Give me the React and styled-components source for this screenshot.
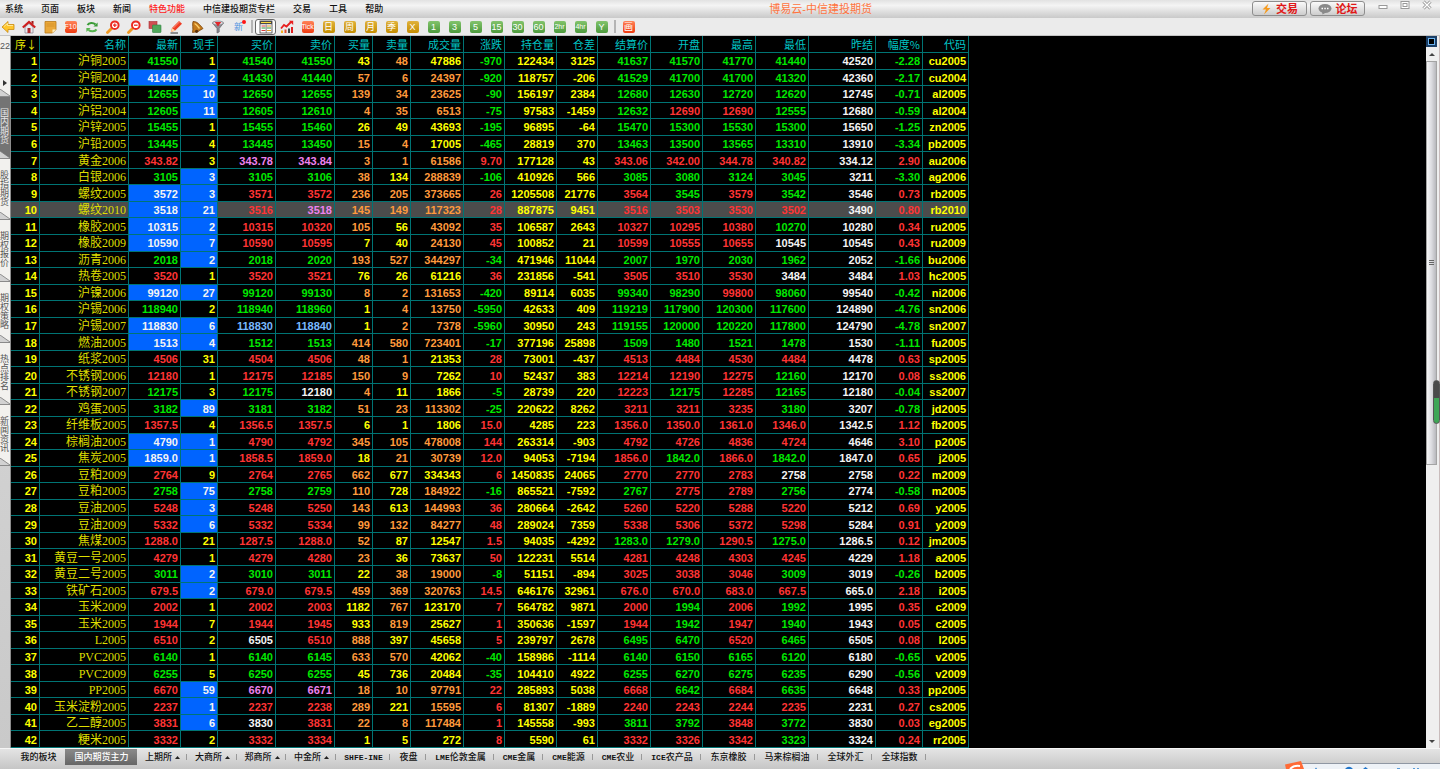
import React from 'react';
import styled, { createGlobalStyle } from 'styled-components';

const GlobalStyle = createGlobalStyle`
  * {
    box-sizing: border-box;
  }
  body {
    margin: 0;
    background: #d6d6d6;
    font-family: "Liberation Sans", "Noto Sans CJK SC", sans-serif;
    font-size: 9px;
  }
  button {
    margin: 0;
    padding: 0;
    border: 0;
    background: none;
    font: inherit;
    color: inherit;
    cursor: pointer;
  }
`;

const RED = '#ff3434';
const GREEN = '#00e800';
const YELLOW = '#ffff00';
const ORANGE = '#ff9a3c';
const WHITE = '#f4f4f4';
const VIOLET = '#ee82ee';
const SKY = '#78b8ff';

const menus = ['系统', '页面', '板块', '新闻', '特色功能', '中信建投期货专栏', '交易', '工具', '帮助'];

const columns = [
  { name: '序↓', width: 29 },
  { name: '名称', width: 89 },
  { name: '最新', width: 52 },
  { name: '现手', width: 37 },
  { name: '买价', width: 58 },
  { name: '卖价', width: 59 },
  { name: '买量', width: 38 },
  { name: '卖量', width: 38 },
  { name: '成交量', width: 53 },
  { name: '涨跌', width: 41 },
  { name: '持仓量', width: 52 },
  { name: '仓差', width: 41 },
  { name: '结算价', width: 53 },
  { name: '开盘', width: 52 },
  { name: '最高', width: 53 },
  { name: '最低', width: 53 },
  { name: '昨结', width: 67 },
  { name: '幅度%', width: 47 },
  { name: '代码', width: 46 },
];

// * = just traded, ! = active volume, v / b = special quote colour
const quotes = `
沪铜2005 41550 1 41540 41550 !43 48 !47886 -970 122434 3125 41637 41570 41770 41440 42520 -2.28 cu2005
沪铜2004 *41440 *2 41430 41440 57 6 24397 -920 118757 -206 41529 41700 41700 41320 42360 -2.17 cu2004
沪铝2005 12655 *10 12650 12655 139 34 23625 -90 156197 2384 12680 12630 12720 12620 12745 -0.71 al2005
沪铝2004 12605 *11 12605 12610 4 35 6513 -75 97583 -1459 12632 12690 12690 12555 12680 -0.59 al2004
沪锌2005 15455 1 15455 15460 !26 !49 !43693 -195 96895 -64 15470 15300 15530 15300 15650 -1.25 zn2005
沪铅2005 13445 4 13445 13450 15 4 !17005 -465 28819 370 13463 13500 13565 13310 13910 -3.34 pb2005
黄金2006 343.82 3 v343.78 v343.84 3 1 61586 9.70 177128 43 343.06 342.00 344.78 340.82 334.12 2.90 au2006
白银2006 3105 *3 3105 3106 38 !134 288839 -106 410926 566 3085 3080 3124 3045 3211 -3.30 ag2006
螺纹2005 *3572 *3 3571 3572 236 205 373665 26 1205508 21776 3564 3545 3579 3542 3546 0.73 rb2005
螺纹2010 *3518 *21 3516 v3518 145 149 117323 28 887875 9451 3516 3503 3530 3502 3490 0.80 rb2010
橡胶2005 *10315 *2 10315 10320 105 !56 43092 35 106587 2643 10327 10295 10380 10270 10280 0.34 ru2005
橡胶2009 *10590 *7 10590 10595 !7 !40 24130 45 100852 21 10599 10555 10655 10545 10545 0.43 ru2009
沥青2006 2018 *2 2018 2020 193 527 344297 -34 471946 11044 2007 1970 2030 1962 2052 -1.66 bu2006
热卷2005 3520 1 3520 3521 !76 !26 !61216 36 231856 -541 3505 3510 3530 3484 3484 1.03 hc2005
沪镍2006 *99120 *27 99120 99130 8 2 131653 -420 89114 6035 99340 98290 99800 98060 99540 -0.42 ni2006
沪锡2006 118940 2 118940 118960 !1 4 13750 -5950 42633 409 119219 117900 120300 117600 124890 -4.76 sn2006
沪锡2007 *118830 *6 b118830 b118840 !1 2 7378 -5960 30950 243 119155 120000 120220 117800 124790 -4.78 sn2007
燃油2005 *1513 *4 1512 1513 414 580 723401 -17 377196 25898 1509 1480 1521 1478 1530 -1.11 fu2005
纸浆2005 4506 31 4504 4506 48 1 !21353 28 73001 -437 4513 4484 4530 4484 4478 0.63 sp2005
不锈钢2006 12180 1 12175 12185 150 9 !7262 10 52437 383 12214 12190 12275 12160 12170 0.08 ss2006
不锈钢2007 12175 3 12175 12180 4 !11 !1866 -5 28739 220 12223 12175 12285 12165 12180 -0.04 ss2007
鸡蛋2005 3182 *89 3181 3182 51 23 113302 -25 220622 8262 3211 3211 3235 3180 3207 -0.78 jd2005
纤维板2005 1357.5 4 1356.5 1357.5 !6 !1 !1806 15.0 4285 223 1356.0 1350.0 1361.0 1346.0 1342.5 1.12 fb2005
棕榈油2005 *4790 *1 4790 4792 345 105 478008 144 263314 -903 4792 4726 4836 4724 4646 3.10 p2005
焦炭2005 *1859.0 *1 1858.5 1859.0 !18 21 30739 12.0 94053 -7194 1856.0 1842.0 1866.0 1842.0 1847.0 0.65 j2005
豆粕2009 2764 9 2764 2765 662 !677 !334343 6 1450835 24065 2770 2770 2783 2758 2758 0.22 m2009
豆粕2005 2758 *75 2758 2759 110 !728 184922 -16 865521 -7592 2767 2775 2789 2756 2774 -0.58 m2005
豆油2005 5248 *3 5248 5250 143 !613 144993 36 280664 -2642 5260 5220 5288 5220 5212 0.69 y2005
豆油2009 5332 *6 5332 5334 99 132 84277 48 289024 7359 5338 5306 5372 5298 5284 0.91 y2009
焦煤2005 1288.0 21 1287.5 1288.0 52 !87 !12547 1.5 94035 -4292 1283.0 1279.0 1290.5 1275.0 1286.5 0.12 jm2005
黄豆一号2005 4279 1 4279 4280 23 !36 !73637 50 122231 5514 4281 4248 4303 4245 4229 1.18 a2005
黄豆二号2005 3011 *2 3010 3011 !22 38 19000 -8 51151 -894 3025 3038 3046 3009 3019 -0.26 b2005
铁矿石2005 679.5 *2 679.0 679.5 459 369 320763 14.5 646176 32961 676.0 670.0 683.0 667.5 665.0 2.18 i2005
玉米2009 2002 1 2002 2003 !1182 767 !123170 7 564782 9871 2000 1994 2006 1992 1995 0.35 c2009
玉米2005 1944 7 1944 1945 !933 819 !25627 1 350636 -1597 1944 1942 1947 1940 1943 0.05 c2005
L2005 6510 2 6505 6510 888 !397 !45658 5 239797 2678 6495 6470 6520 6465 6505 0.08 l2005
PVC2005 6140 1 6140 6145 633 570 !42062 -40 158986 -1114 6140 6150 6165 6120 6180 -0.65 v2005
PVC2009 6255 5 6250 6255 !45 !736 !20484 -35 104410 4922 6255 6270 6275 6235 6290 -0.56 v2009
PP2005 6670 *59 v6670 v6671 18 10 97791 22 285893 5038 6668 6642 6684 6635 6648 0.33 pp2005
玉米淀粉2005 2237 *1 2237 2238 289 !221 15595 6 81307 -1889 2240 2243 2244 2235 2231 0.27 cs2005
乙二醇2005 3831 *6 3830 3831 22 8 117484 1 145558 -993 3811 3792 3848 3772 3830 0.03 eg2005
粳米2005 3332 2 3332 3334 !1 !5 !272 8 5590 61 3332 3326 3342 3323 3324 0.24 rr2005
`.trim().split('\n').map((line) => line.split(' '));

const boards = [
  { name: '我的板块', width: 54, plain: true },
  { name: '国内期货主力', width: 72, active: true },
  { name: '上期所', width: 50, more: true },
  { name: '大商所', width: 50, more: true },
  { name: '郑商所', width: 49, more: true },
  { name: '中金所', width: 50, more: true },
  { latin: 'SHFE-INE', name: '', width: 54 },
  { name: '夜盘', width: 36 },
  { latin: 'LME', name: '伦敦金属', width: 68 },
  { latin: 'CME', name: '金属', width: 49 },
  { latin: 'CME', name: '能源', width: 50 },
  { latin: 'CME', name: '农业', width: 49 },
  { latin: 'ICE', name: '农产品', width: 59 },
  { name: '东京橡胶', width: 54 },
  { name: '马来棕榈油', width: 63 },
  { name: '全球外汇', width: 54 },
  { name: '全球指数', width: 54 },
];

const periods = [
  ['Tick', 'red'], ['日', 'gold'], ['周', 'gold'], ['月', 'gold'], ['季', 'gold'], ['X', 'gold'],
  ['1', 'green'], ['3', 'green'], ['5', 'green'], ['15', 'green'], ['30', 'green'], ['60', 'green'],
  ['2hr', 'green'], ['4hr', 'green'], ['Y', 'green'],
];

const sideTabs = ['国内期货', '股指期货', '期权报价', '期权策略', '热点排名', '新闻资讯'];

const badgeColors = {
  red: 'linear-gradient(#ff8358, #ee3a10)',
  gold: 'linear-gradient(#e0b23c, #c48c00)',
  green: 'linear-gradient(#82c46c, #4c9a3c)',
};

function toneOf(index, text, prev) {
  if (text[0] === '*') return WHITE;
  if (text[0] === 'v') return VIOLET;
  if (text[0] === 'b' && index < 5) return SKY;
  if ([1, 3, 4, 11, 12, 13, 14].includes(index)) {
    const diff = Number(text) - prev;
    if (diff === 0) return WHITE;
    return diff > 0 ? RED : GREEN;
  }
  if ([5, 6, 7].includes(index)) return text[0] === '!' ? YELLOW : ORANGE;
  if (index === 8 || index === 16) return Number(text) > 0 ? RED : GREEN;
  if (index === 15) return WHITE;
  return YELLOW;
}

const icons = {
  back: (
    <>
      <path d="M1 7 L7 1.5 V4.5 H13 V9.5 H7 V12.5 Z" fill="#ffc62b" stroke="#c98a10" strokeWidth="0.8" />
      <path d="M3 6.5 L6.5 3.5 V5.5 H12" fill="none" stroke="#ffe896" />
    </>
  ),
  home: (
    <>
      <path d="M3 7 V13 H11 V7 L7 3.5 Z" fill="#e9e9ee" stroke="#8a8a98" strokeWidth="0.8" />
      <path d="M0.8 7.5 L7 2 L13.2 7.5" fill="none" stroke="#cf1f1f" strokeWidth="2.2" />
      <path d="M9.5 1 H11.5 V4.5 L9.5 3 Z" fill="#a51a1a" />
      <rect x="5.5" y="8" width="3" height="5" fill="#b02a2a" />
    </>
  ),
  note: (
    <>
      <path d="M2 1.5 H13 V9.5 L9.5 13 H2 Z" fill="#eaa83a" stroke="#b97a1a" strokeWidth="0.8" />
      <path d="M13 9.5 H9.5 V13 Z" fill="#fff0bd" />
      <path d="M3.5 4 H11.5 M3.5 6 H11.5" stroke="#c98520" strokeWidth="0.6" />
    </>
  ),
  refresh: (
    <>
      <path d="M2.5 5 C4 2.6 8 2.4 10.5 4.4" fill="none" stroke="#3b9b38" strokeWidth="2" />
      <path d="M12.6 2.4 V6.4 H8.4 Z" fill="#3b9b38" />
      <path d="M11.5 9.4 C10 11.8 6 12 3.5 10" fill="none" stroke="#57b550" strokeWidth="2" />
      <path d="M1.4 12 V8 H5.6 Z" fill="#57b550" />
    </>
  ),
  zoomIn: (
    <>
      <path d="M1.5 12.5 L5.5 8.5" stroke="#f09a22" strokeWidth="2.8" strokeLinecap="round" />
      <circle cx="8.8" cy="5.2" r="3.8" fill="#fff" stroke="#ec2a20" strokeWidth="2" />
      <path d="M7 5.2 H10.6 M8.8 3.4 V7" stroke="#ec2a20" strokeWidth="1.3" />
    </>
  ),
  zoomOut: (
    <>
      <path d="M1.5 12.5 L5.5 8.5" stroke="#f09a22" strokeWidth="2.8" strokeLinecap="round" />
      <circle cx="8.8" cy="5.2" r="3.8" fill="#fff" stroke="#ec2a20" strokeWidth="2" />
      <path d="M7 5.2 H10.6" stroke="#ec2a20" strokeWidth="1.3" />
    </>
  ),
  overlay: (
    <>
      <rect x="1" y="1.5" width="8" height="7" fill="#cf4f52" stroke="#a83034" strokeWidth="0.6" />
      <rect x="4.5" y="5" width="8.5" height="7.5" rx="0.6" fill="#4fa85b" stroke="#2f8240" strokeWidth="0.6" />
    </>
  ),
  pencil: (
    <>
      <path d="M3 8 L10 1 L13 3.8 L6.2 10.6 L2 12 Z" fill="#ee3c24" />
      <path d="M3 8 L6.2 10.6 L2 12 Z" fill="#ffd9a0" />
      <path d="M4.4 8 L10.6 1.8" stroke="#ff9a80" strokeWidth="1" />
      <path d="M1.5 13 H9" stroke="#333" strokeWidth="1" />
    </>
  ),
  bell: (
    <>
      <path d="M3 1.5 C7 1 10 5 13 8.5 L8 11.5 L2.5 12.5 C3.5 8 2 5 3 1.5 Z" fill="#c47a1c" stroke="#7a4308" strokeWidth="0.8" />
      <path d="M4.6 3.5 C6.5 4.5 8 6.5 9.5 8.5" fill="none" stroke="#ffcf6b" strokeWidth="1.4" />
      <circle cx="6.6" cy="11.3" r="1.6" fill="#5a2f0a" />
    </>
  ),
  funnel: (
    <>
      <path d="M1.5 3 L6 8.5 V13 L8.2 12 V8.5 L12.5 3 Z" fill="#8d8d93" stroke="#55555c" strokeWidth="0.6" />
      <ellipse cx="7" cy="3" rx="5.5" ry="2" fill="#d8d8dc" stroke="#77777c" strokeWidth="0.7" />
      <path d="M3.8 2 H10.2 L7 6.4 Z" fill="#e2262a" />
    </>
  ),
  quote: (
    <>
      <rect x="1" y="1" width="12" height="12" fill="#fff" stroke="#404040" strokeWidth="0.8" />
      <rect x="1" y="1" width="12" height="3.2" fill="#4a4a4a" />
      <rect x="2" y="2" width="10" height="1" fill="#ffd93b" />
      <path d="M2.5 6 H6.5 M2.5 10.5 H6.5" stroke="#d93a3a" />
      <path d="M2.5 8 H6.5 M8 8 H12" stroke="#2c9b3e" />
      <path d="M8 6 H12 M8 10.5 H12" stroke="#e0931c" />
      <path d="M7.2 4.5 V13" stroke="#606060" strokeWidth="0.8" />
    </>
  ),
  trend: (
    <>
      <path d="M1 8.5 L4 5 L6.5 6.5 L11.5 1.5" fill="none" stroke="#e81f1f" strokeWidth="1.8" />
      <path d="M9 0.8 H13.2 V5 Z" fill="#e81f1f" />
      <path d="M2 10.5 V13" stroke="#f5b020" strokeWidth="2" />
      <path d="M5.5 9.5 V13" stroke="#e05030" strokeWidth="2" />
      <path d="M9 8.5 V13" stroke="#444" strokeWidth="2" />
      <path d="M12 7 V13" stroke="#e02020" strokeWidth="2" />
    </>
  ),
};

const tools = [
  ['返回', 'back'], ['首页', 'home'], ['便签', 'note'], ['F10', null], ['刷新', 'refresh'],
  ['放大', 'zoomIn'], ['缩小', 'zoomOut'], ['叠加', 'overlay'], ['画线', 'pencil'],
  ['预警', 'bell'], ['筛选', 'funnel'],
];

const Icon = ({ name }) => (
  <svg width="14" height="14" viewBox="0 0 14 14" aria-hidden="true">{icons[name]}</svg>
);

const QuoteRow = ({ row, number }) => {
  const prev = Number(row[15]);
  return (
    <Row $selected={number === 10}>
      <Cell $color={YELLOW}>{number}</Cell>
      {row.map((text, i) => {
        if (i === 0) return <NameCell key={i}>{text}</NameCell>;
        const label = i === 17 ? text : text.replace(/^[*!vb]/, '');
        return (
          <Cell key={i} $color={i === 17 ? YELLOW : toneOf(i, text, prev)} $flash={text[0] === '*'}>
            {label}
          </Cell>
        );
      })}
    </Row>
  );
};

export default function App() {
  return (
    <Shell>
      <GlobalStyle />
      <TitleBar>
        <Menu>
          {menus.map((m) => <MenuItem key={m} $hot={m === '特色功能'}>{m}</MenuItem>)}
        </Menu>
        <Title>博易云-中信建投期货</Title>
        <Actions>
          <ActionButton>
            <svg width="11" height="12" viewBox="0 0 11 12" aria-hidden="true">
              <path d="M7.5 0.5 L1.5 6.5 H5 L3 11.5 L9.5 5 H6 Z" fill="#f59a1e" />
            </svg>
            交易
          </ActionButton>
          <ActionButton>
            <svg width="14" height="12" viewBox="0 0 14 12" aria-hidden="true">
              <ellipse cx="7" cy="5.5" rx="6.5" ry="4.5" fill="#8a8a8a" />
              <path d="M4 8.5 L4.5 11.5 L8 9.5 Z" fill="#8a8a8a" />
              <path d="M3.5 5.5 H5 M6.3 5.5 H7.8 M9 5.5 H10.5" stroke="#fff" strokeWidth="1.4" />
            </svg>
            论坛
          </ActionButton>
        </Actions>
        <WindowButtons>
          <button aria-label="最小化">
            <svg width="10" height="12"><rect x="1" y="5.5" width="8" height="3" fill="#fff" stroke="#9a9a9a" /></svg>
          </button>
          <button aria-label="还原">
            <svg width="10" height="12">
              <rect x="1" y="1.5" width="8" height="7" fill="#fff" stroke="#9a9a9a" />
              <rect x="3" y="3.5" width="4" height="3" fill="#fff" stroke="#9a9a9a" />
            </svg>
          </button>
          <button aria-label="关闭">
            <svg width="10" height="12">
              <path d="M1.5 1.5 L8.5 8.5 M8.5 1.5 L1.5 8.5" stroke="#8f8f8f" strokeWidth="3" />
              <path d="M1.5 1.5 L8.5 8.5 M8.5 1.5 L1.5 8.5" stroke="#fff" strokeWidth="1.4" />
            </svg>
          </button>
        </WindowButtons>
      </TitleBar>

      <ToolBar>
        {tools.map(([label, icon]) => (
          <Tool key={label} aria-label={label}>
            {icon ? <Icon name={icon} /> : <Badge $kind="red" $small>{label}</Badge>}
          </Tool>
        ))}
        <Tool>
          <NewMark>新<RedDot /></NewMark>
        </Tool>
        <Divider />
        <Tool aria-label="报价" $pressed><Icon name="quote" /></Tool>
        <Tool aria-label="走势"><Icon name="trend" /></Tool>
        {periods.map(([label, kind]) => (
          <Tool key={label}><Badge $kind={kind} $small={label.length > 2}>{label}</Badge></Tool>
        ))}
        <Divider />
        <Tool><Badge $kind="red">画</Badge></Tool>
      </ToolBar>

      <Body>
        <Side>
          <SideTabs>
            <SideTop>
              <span>22</span>
              <svg width="4" height="6" aria-hidden="true"><path d="M0 0 L4 3 L0 6 Z" fill="#333" /></svg>
              <Slant />
            </SideTop>
            {sideTabs.map((t, i) => (
              <SideTab key={t} $active={i === 0}>
                {t}
                <Slant />
              </SideTab>
            ))}
          </SideTabs>
        </Side>

        <Board>
          <Quotes>
            <colgroup>
              {columns.map((c) => <Col key={c.name} $width={c.width} />)}
            </colgroup>
            <thead>
              <tr>
                {columns.map((c, i) => <Head key={c.name} $first={i === 0}>{c.name}</Head>)}
              </tr>
            </thead>
            <tbody>
              {quotes.map((row, i) => <QuoteRow key={row[17]} row={row} number={i + 1} />)}
            </tbody>
          </Quotes>
        </Board>

        <ScrollBar>
          <SplitButton aria-label="窗口" />
          <ScrollArrow aria-label="上"><svg width="6" height="3"><path d="M0 3 L3 0 L6 3 Z" fill="#444" /></svg></ScrollArrow>
          <Track>
            <Thumb><i /><i /><i /></Thumb>
          </Track>
          <ScrollArrow aria-label="下"><svg width="6" height="3"><path d="M0 0 L3 3 L6 0 Z" fill="#444" /></svg></ScrollArrow>
          <Gauge />
        </ScrollBar>
      </Body>

      <BoardTabs>
        {boards.map((b) => (
          <BoardTab key={(b.latin || '') + b.name} $width={b.width} $active={b.active} $plain={b.plain}>
            {b.latin && <Latin>{b.latin}</Latin>}
            {b.name}
            {b.more && <svg width="8" height="3" aria-hidden="true"><path d="M3 3 L5.500 0 L8 3 Z" fill="#222" /></svg>}
          </BoardTab>
        ))}
      </BoardTabs>

      <InputBar aria-hidden="true">
        <svg width="155" height="8" viewBox="0 0 155 8">
          <path d="M10 2.500 H155" stroke="#8f97a3" />
          <rect x="10" y="3" width="145" height="5" fill="#eef2f7" />
          <path d="M0 3.500 L16 0 L19 8 H1 Z" fill="#ff6a35" />
          <path d="M5 8 Q9 4 15 5" fill="none" stroke="#fff" strokeWidth="2" />
          <path d="M30 8 L31 6.500 L32 8 Z M60 8 Q64 3.500 68 8 Z M78 8 L80.500 6 L83 8 Z" fill="#1f74c9" />
          <path d="M112 7.500 H115 M128 7.500 H130 M132 7.500 H134" stroke="#5a9bd8" />
        </svg>
      </InputBar>
    </Shell>
  );
}

const Shell = styled.div`
  position: relative;
  display: flex;
  flex-direction: column;
  height: 100vh;
  overflow: hidden;
`;

const TitleBar = styled.header`
  display: flex;
  align-items: center;
  flex: none;
  height: 18px;
  background: linear-gradient(#e2e2e2, #f4f4f4 30%, #c9c9c9);
`;

const Menu = styled.nav`
  display: flex;
  gap: 18px;
  padding-left: 5px;
`;

const MenuItem = styled.button`
  line-height: 16px;
  font-weight: 500;
  color: ${(p) => (p.$hot ? '#ff1c1c' : '#111')};
`;

const Title = styled.div`
  flex: 1;
  padding-left: 6px;
  text-align: center;
  font-size: 11px;
  line-height: 16px;
  color: #ff7440;
`;

const Actions = styled.div`
  display: flex;
  gap: 3px;
  height: 100%;
  padding-top: 1px;
`;

const ActionButton = styled.button`
  display: flex;
  align-items: center;
  justify-content: center;
  gap: 4px;
  width: 55px;
  height: 15px;
  border: 1px solid #8e8e8e;
  border-radius: 3px;
  background: linear-gradient(#fafafa, #cdcdcd);
  font-size: 11px;
  font-weight: 700;
  line-height: 12px;
  color: #e01818;
`;

const WindowButtons = styled.div`
  display: flex;
  align-items: flex-start;
  justify-content: space-between;
  width: 54px;
  height: 100%;
  margin: 0 8px 0 13px;
  button {
    height: 12px;
  }
  svg {
    display: block;
  }
`;

const ToolBar = styled.div`
  display: flex;
  align-items: center;
  flex: none;
  height: 18px;
  margin-left: -3px;
  background: #ebebeb;
  border-bottom: 1px solid #c4c4c4;
`;

const Tool = styled.button`
  display: flex;
  align-items: center;
  justify-content: center;
  flex: none;
  width: 21px;
  height: 16px;
  border-radius: 3px;
  border: ${(p) => (p.$pressed ? '1px solid #666' : '0')};
  background: ${(p) => (p.$pressed ? '#fdfdfd' : 'none')};
`;

const Badge = styled.span`
  display: flex;
  align-items: center;
  justify-content: center;
  width: 12px;
  height: 12px;
  border-radius: 2px;
  background: ${(p) => badgeColors[p.$kind]};
  color: #fff;
  font-size: ${(p) => (p.$small ? '7px' : '9px')};
  line-height: 12px;
`;

const NewMark = styled.span`
  position: relative;
  color: #4c92e0;
  line-height: 12px;
`;

const RedDot = styled.i`
  position: absolute;
  top: -1px;
  right: -3px;
  width: 4px;
  height: 4px;
  border-radius: 50%;
  background: #ff1414;
`;

const Divider = styled.span`
  flex: none;
  width: 2px;
  height: 13px;
  margin: 0 2px;
  background: #b4b4b4;
`;

const Body = styled.main`
  display: flex;
  flex: 1;
  min-height: 0;
`;

const Side = styled.aside`
  flex: none;
  width: 11px;
  background: linear-gradient(#dcdcdc, #c9c9c9);
  border-right: 1px solid #8c8c8c;
`;

const SideTabs = styled.div`
  display: grid;
  grid-template-rows: repeat(7, 1fr);
  height: 430px;
`;

const SideTop = styled.div`
  position: relative;
  display: flex;
  flex-direction: column;
  justify-content: space-between;
  background: #f2f1ee;
  color: #555;
  padding: 6px 0 11px;
  line-height: 9px;
  svg:first-of-type {
    margin-left: 3px;
  }
`;

const SideTab = styled.button`
  position: relative;
  display: flex;
  align-items: flex-start;
  width: 10px;
  padding-top: 12px;
  background: ${(p) => (p.$active ? '#747474' : '#f2f1ee')};
  color: ${(p) => (p.$active ? '#e8e8e8' : '#555')};
  line-height: 9px;
  text-align: left;
  word-break: break-all;
`;

const SlantMark = styled.svg`
  position: absolute;
  left: 0;
  bottom: 0;
`;

function Slant() {
  return (
    <SlantMark width="10" height="8" aria-hidden="true">
      <path d="M0 0 L10 7 V8 H0 Z" fill="#d2d2d2" />
      <path d="M0 0 L10 7 M0 7.500 H10" stroke="#777" fill="none" strokeWidth="0.8" />
    </SlantMark>
  );
}

const Board = styled.section`
  flex: 1;
  min-width: 0;
  background: #000;
  overflow: hidden;
`;

const Quotes = styled.table`
  width: 958px;
  height: 100%;
  table-layout: fixed;
  border-spacing: 0;
`;

const Col = styled.col`
  width: ${(p) => p.$width}px;
`;

const Head = styled.th`
  height: 17px;
  padding: 0 2px 0 0;
  border-right: 1px solid #007474;
  border-bottom: 1px solid #007474;
  font-family: "Noto Sans CJK SC", sans-serif;
  font-size: 11px;
  font-weight: 400;
  line-height: 15px;
  text-align: right;
  white-space: nowrap;
  color: ${(p) => (p.$first ? '#e6e600' : '#00c4c4')};
`;

const Row = styled.tr`
  background: ${(p) => (p.$selected ? '#4c4c4c' : 'none')};
`;

const Cell = styled.td`
  padding: 1px 2px 0 0;
  border-right: 1px solid #007474;
  border-bottom: 1px solid #007474;
  background: ${(p) => (p.$flash ? '#0064ff' : 'none')};
  font-family: "Liberation Sans", sans-serif;
  font-size: 11px;
  font-weight: 700;
  line-height: 14px;
  text-align: right;
  white-space: nowrap;
  color: ${(p) => p.$color};
`;

const NameCell = styled(Cell)`
  font-family: "Liberation Serif", "Noto Sans CJK SC", serif;
  font-size: 12px;
  font-weight: 400;
  color: #dede00;
`;

const ScrollBar = styled.div`
  position: relative;
  display: flex;
  flex-direction: column;
  flex: none;
  width: 14px;
  padding: 0 2px 0 0;
  background: #efefef;
  border-right: 1px solid #c9bcbc;
`;

const SplitButton = styled.button`
  height: 11px;
  border: 2px solid #1c3f66;
  background: #000;
  outline: 1px solid #6db4f0;
  outline-offset: -3px;
`;

const ScrollArrow = styled.button`
  display: flex;
  align-items: center;
  justify-content: center;
  height: 14px;
`;

const Track = styled.div`
  flex: 1;
`;

const Thumb = styled.div`
  display: flex;
  flex-direction: column;
  align-items: center;
  justify-content: center;
  gap: 1px;
  height: 60%;
  border: 1px solid #a4a4a4;
  background: linear-gradient(90deg, #f6f6f6, #dcdce0 50%, #b8b8bc);
  i {
    width: 5px;
    height: 1px;
    background: #666;
  }
`;

const Gauge = styled.div`
  position: absolute;
  top: 344px;
  right: -1px;
  width: 7px;
  height: 44px;
  border: 1px solid #555;
  border-radius: 4px;
  background: linear-gradient(#4a4a4a 40%, #3fa656 40%);
`;

const BoardTabs = styled.footer`
  display: flex;
  flex: none;
  height: 21px;
  padding: 0 0 4px 11px;
  border-top: 1px solid #f6f6f6;
  background: linear-gradient(#e4e4e4, #c6c6c6);
`;

const BoardTab = styled.button`
  display: flex;
  align-items: center;
  justify-content: center;
  position: relative;
  flex: none;
  width: ${(p) => p.$width}px;
  padding-left: 1px;
  line-height: 15px;
  font-weight: 500;
  white-space: nowrap;
  background: ${(p) => (p.$active ? 'linear-gradient(#8a8a8a, #666)' : 'none')};
  color: ${(p) => (p.$active ? '#fff' : '#111')};
  &::after {
    content: "";
    display: ${(p) => (p.$active || p.$plain ? 'none' : 'block')};
    position: absolute;
    right: 0;
    top: 5px;
    width: 1px;
    height: 6px;
    background: #999;
  }
`;

const Latin = styled.span`
  font-family: "Liberation Mono", monospace;
  font-size: 8px;
  font-weight: 700;
`;

const InputBar = styled.div`
  position: absolute;
  right: 0;
  bottom: 0;
  height: 8px;
  line-height: 0;
`;
